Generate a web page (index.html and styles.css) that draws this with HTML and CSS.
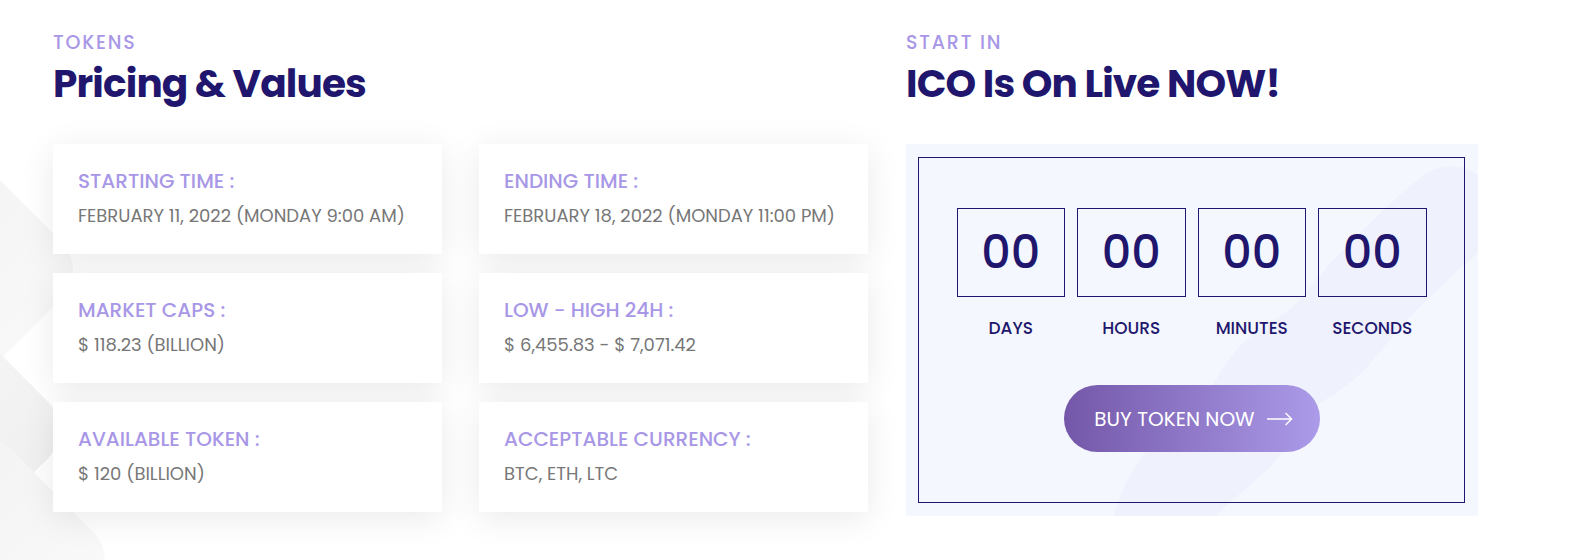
FILE: index.html
```html
<!DOCTYPE html>
<html lang="en">
<head>
<meta charset="utf-8">
<title>Pricing & Values</title>
<link rel="stylesheet" href="styles.css">
</head>
<body>
<div class="page">
  <div class="bg-shape bg-shape-a"></div>
  <div class="bg-shape bg-shape-b"></div>
  <div class="bg-shape bg-shape-c"></div>
  <main class="section">
    <section class="col-left">
      <div class="eyebrow">TOKENS</div>
      <h2 class="title">Pricing &amp; Values</h2>
      <div class="cards">
        <div class="card"><div class="card-label">STARTING TIME :</div><div class="card-value">FEBRUARY 11, 2022 (MONDAY 9:00 AM)</div></div>
        <div class="card"><div class="card-label">ENDING TIME :</div><div class="card-value">FEBRUARY 18, 2022 (MONDAY 11:00 PM)</div></div>
        <div class="card"><div class="card-label">MARKET CAPS :</div><div class="card-value">$ 118.23 (BILLION)</div></div>
        <div class="card"><div class="card-label">LOW - HIGH 24H :</div><div class="card-value">$ 6,455.83 - $ 7,071.42</div></div>
        <div class="card"><div class="card-label">AVAILABLE TOKEN :</div><div class="card-value">$ 120 (BILLION)</div></div>
        <div class="card"><div class="card-label">ACCEPTABLE CURRENCY :</div><div class="card-value">BTC, ETH, LTC</div></div>
      </div>
    </section>
    <section class="col-right">
      <div class="eyebrow">START IN</div>
      <h2 class="title">ICO Is On Live NOW!</h2>
      <div class="ico-box">
        <svg class="blob" viewBox="0 0 572 372" aria-hidden="true">
          <path d="M255 380 C270 330 300 320 330 290 C355 265 350 240 395 215 C430 195 440 170 470 140 C500 110 520 90 545 70" fill="none" stroke="#eff2fd" stroke-width="95" stroke-linecap="round" stroke-linejoin="round"/>
        </svg>
        <div class="ico-inner">
          <div class="timer">
            <div class="unit"><div class="digits">00</div><div class="unit-label">DAYS</div></div>
            <div class="unit"><div class="digits">00</div><div class="unit-label">HOURS</div></div>
            <div class="unit"><div class="digits">00</div><div class="unit-label">MINUTES</div></div>
            <div class="unit"><div class="digits">00</div><div class="unit-label">SECONDS</div></div>
          </div>
          <a class="btn" href="#">BUY TOKEN NOW
            <svg class="arrow" viewBox="0 0 26 14" aria-hidden="true"><path d="M0 7 H24.5 M18.5 1 L24.6 7 L18.5 13" fill="none" stroke="#fff" stroke-width="1.4"/></svg>
          </a>
        </div>
      </div>
    </section>
  </main>
</div>
</body>
</html>
```
FILE: styles.css
```css
* { box-sizing: border-box; }
html, body { margin: 0; padding: 0; background: #fff; }
.page {
  position: relative;
  width: 1589px;
  height: 560px;
  overflow: hidden;
  background: #fff;
  font-family: "Poppins", "Inter", "Open Sans", sans-serif;
}
.bg-shape {
  position: absolute;
  transform: rotate(45deg);
  z-index: 0;
  border-radius: 40px;
}
.bg-shape-a { width: 240px; height: 240px; left: -200px; top: 150px; background: linear-gradient(90deg, #f2f2f2, #f8f8f8); }
.bg-shape-b { width: 200px; height: 200px; left: -165px; top: 330px; background: linear-gradient(90deg, #f6f6f6, #f0f0f0); }
.bg-shape-c { width: 200px; height: 200px; left: -120px; top: 460px; background: linear-gradient(90deg, #f3f3f3, #f9f9f9); }

.section {
  position: relative;
  z-index: 1;
  display: flex;
  gap: 38px;
  padding: 30px 0 0 53px;
}
.col-left { width: 815px; }
.col-right { width: 572px; }
.eyebrow {
  color: #a897e6;
  font-size: 19px;
  font-weight: 500;
  letter-spacing: 1.8px;
  line-height: 26px;
}
.title {
  margin: 4px 0 0;
  color: #21166d;
  font-size: 39px;
  font-weight: 700;
  line-height: 48px;
  letter-spacing: -0.85px;
}
.cards {
  margin-top: 36px;
  display: grid;
  grid-template-columns: 389px 389px;
  column-gap: 37px;
  row-gap: 19px;
}
.card {
  background: #fff;
  height: 110px;
  padding: 25px 25px 0;
  box-shadow: 0 6px 32px rgba(0, 0, 0, 0.085);
}
.card-label {
  color: #a897e6;
  font-size: 20px;
  font-weight: 500;
  line-height: 24px;
}
.card-value {
  margin-top: 11px;
  color: #777;
  font-size: 18px;
  line-height: 24px;
}
.ico-box {
  position: relative;
  margin-top: 36px;
  width: 572px;
  height: 372px;
  background: #f4f7fe;
  padding: 13px 13px 13px 12px;
  overflow: hidden;
}
.blob {
  position: absolute;
  left: 0;
  top: 0;
  width: 572px;
  height: 372px;
}
.ico-inner {
  position: relative;
  height: 346px;
  border: 1px solid #21166d;
  display: flex;
  flex-direction: column;
  align-items: center;
  padding-top: 50px;
}
.timer {
  display: flex;
  gap: 12px;
}
.unit {
  width: 108.5px;
  display: flex;
  flex-direction: column;
  align-items: center;
}
.digits {
  width: 108.5px;
  height: 89px;
  border: 1px solid #21166d;
  color: #21166d;
  font-size: 46px;
  font-weight: 500;
  line-height: 87px;
  text-align: center;
}
.unit-label {
  margin-top: 19px;
  color: #21166d;
  font-size: 17px;
  font-weight: 500;
  line-height: 24px;
}
.btn {
  margin-top: 45px;
  width: 256px;
  height: 67px;
  border-radius: 34px;
  background: linear-gradient(90deg, #7457a8, #ab9be9);
  color: #fff;
  text-decoration: none;
  display: flex;
  align-items: center;
  justify-content: center;
  gap: 12px;
  font-size: 20px;
  font-weight: 400;
  padding-left: 4px;
}
.arrow { width: 26px; height: 14px; }
```
